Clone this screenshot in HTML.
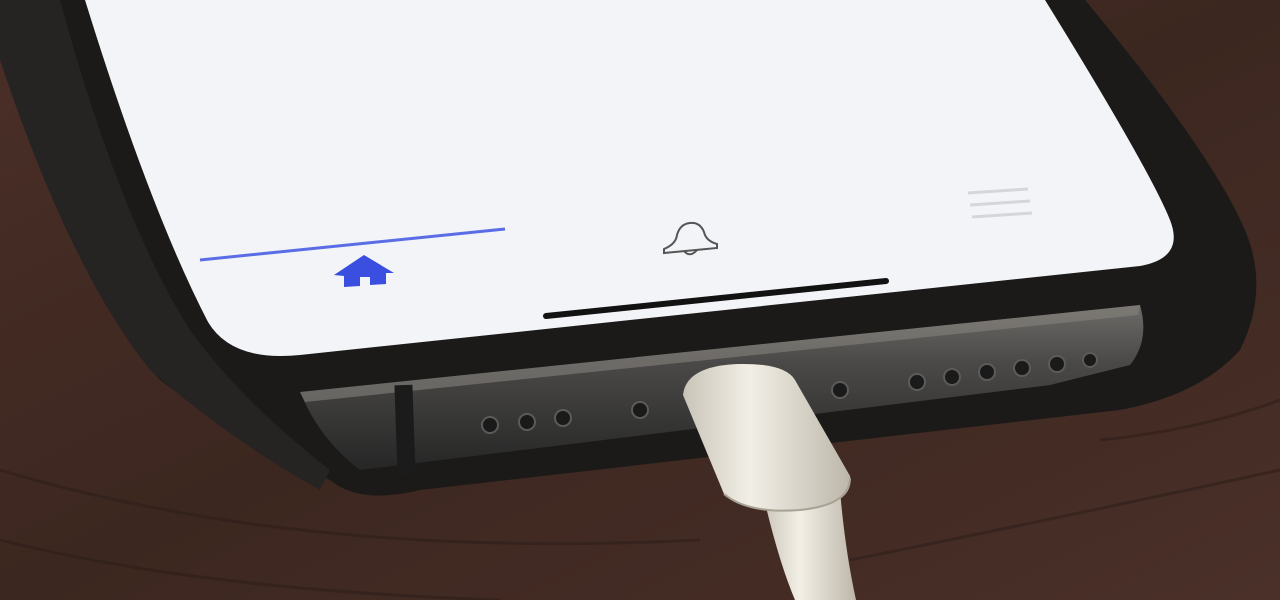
<!DOCTYPE html>
<html><head><meta charset="utf-8"><style>html,body{margin:0;padding:0;width:1280px;height:600px;overflow:hidden;background:#3b2720}</style></head>
<body>
<svg width="1280" height="600" viewBox="0 0 1280 600" xmlns="http://www.w3.org/2000/svg">
<defs>
<linearGradient id="wood" x1="0" y1="0" x2="1" y2="1">
<stop offset="0" stop-color="#4a2f27"/><stop offset="0.5" stop-color="#3c2720"/><stop offset="1" stop-color="#4a3028"/>
</linearGradient>
<linearGradient id="metal" x1="0" y1="0" x2="0" y2="1">
<stop offset="0" stop-color="#6d6b68"/><stop offset="0.35" stop-color="#4a4947"/><stop offset="1" stop-color="#262626"/>
</linearGradient>
<linearGradient id="plug" x1="0" y1="0" x2="1" y2="0">
<stop offset="0" stop-color="#c9c4b8"/><stop offset="0.4" stop-color="#f2efe6"/><stop offset="1" stop-color="#bdb7aa"/>
</linearGradient>
</defs>
<rect width="1280" height="600" fill="url(#wood)"/>
<g stroke="#2c1c17" stroke-width="3" opacity="0.5" fill="none">
<path d="M0,470 Q300,560 700,540"/><path d="M850,560 Q1050,520 1280,470"/><path d="M0,540 Q200,590 500,600"/><path d="M1100,440 Q1200,430 1280,400"/>
</g>
<path d="M0,0 L1085,0 Q1210,150 1245,230 Q1270,290 1240,350 Q1200,395 1120,410 L420,490 Q360,505 330,480 Q240,440 160,380 Q90,300 40,150 Q15,70 0,40 Z" fill="#1c1a19"/>
<path d="M0,0 L60,0 Q120,220 190,330 Q240,400 330,470 L320,490 Q230,440 150,370 Q70,270 0,60 Z" fill="#262422"/>
<path d="M300,392 L1140,305 Q1150,340 1130,365 L1050,385 L360,470 Q320,440 300,392 Z" fill="url(#metal)"/>
<path d="M300,392 L1140,305 L1138,315 L305,402 Z" fill="#85827d" opacity="0.6"/>
<rect x="396" y="385" width="18" height="90" fill="#1b1b1b" transform="rotate(-2 405 430)"/>
<g fill="#1a1a1a" stroke="#5d5b58" stroke-width="2">
<circle cx="490" cy="425" r="8"/><circle cx="527" cy="422" r="8"/><circle cx="563" cy="418" r="8"/><circle cx="640" cy="410" r="8"/>
<circle cx="840" cy="390" r="8"/><circle cx="917" cy="382" r="8"/><circle cx="952" cy="377" r="8"/><circle cx="987" cy="372" r="8"/><circle cx="1022" cy="368" r="8"/><circle cx="1057" cy="364" r="8"/><circle cx="1090" cy="360" r="7"/>
</g>
<path d="M85,0 L1045,0 Q1150,170 1170,220 Q1185,258 1140,266 L300,355 Q232,362 208,322 Q150,210 85,0 Z" fill="#f2f4f7"/>
<path d="M200,260 L505,229" stroke="#5a6de6" stroke-width="3"/>
<path d="M334,275 L364,255 L394,273 L386,273 L386,284 L370,285 L370,277 L360,277 L360,286 L344,287 L344,276 Z" fill="#3a4fe0"/>
<path d="M664,249 Q676,244 677,235 Q680,224 690,223 Q700,222 704,232 Q706,241 717,244 L717,248 L664,253 Z" fill="none" stroke="#555" stroke-width="2"/>
<path d="M684,251 Q690,258 697,250" fill="none" stroke="#555" stroke-width="2"/>
<g stroke="#d3d6db" stroke-width="3"><path d="M968,193 L1028,189"/><path d="M970,205 L1030,201"/><path d="M972,217 L1032,213"/></g>
<path d="M546,316 L886,281" stroke="#121212" stroke-width="6" stroke-linecap="round"/>
<!-- cable -->
<path d="M762,490 Q778,560 795,600 L856,600 Q845,550 840,490 Z" fill="url(#plug)"/>
<path d="M683,395 Q686,366 738,364 Q785,363 795,380 L850,476 Q855,505 800,510 Q745,514 724,494 Z" fill="url(#plug)"/>
<path d="M724,494 Q748,514 800,510 Q850,505 850,478" fill="none" stroke="#a8a295" stroke-width="2"/>
</svg>
</body></html>
